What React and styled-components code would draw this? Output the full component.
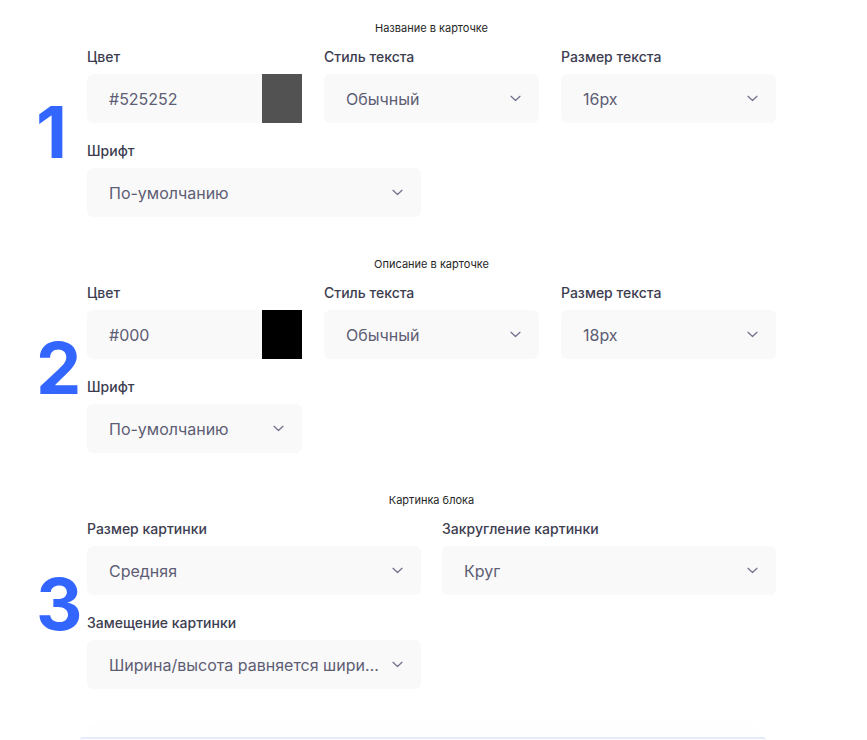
import React from "react";
import styled, { createGlobalStyle } from "styled-components";

const Global = createGlobalStyle`
  html, body { margin: 0; padding: 0; background: #ffffff; }
  body { font-family: Inter, "Noto Sans", "Liberation Sans", sans-serif; -webkit-font-smoothing: antialiased; }
  * { box-sizing: border-box; }
`;

const Page = styled.div`
  width: 867px;
  height: 740px;
  overflow: hidden;
  padding-top: 21px;
  display: flex;
  flex-direction: column;
  gap: 40px;
`;

const Section = styled.section`
  display: flex;
  flex-direction: column;
  padding-left: 36px;
`;

const Title = styled.div`
  margin-left: 51px;
  width: 689px;
  text-align: center;
  font-size: 11px;
  line-height: 14px;
  color: #262626;
  margin-bottom: 12px;
`;

const Body = styled.div`
  display: flex;
  align-items: center;
`;

const Number = styled.div`
  width: 51px;
  flex: none;
  font-size: 72px;
  font-weight: 700;
  line-height: 1;
  color: #3366ff;
  letter-spacing: -1px;
`;

const Form = styled.div`
  width: 689px;
  display: grid;
  grid-template-columns: repeat(${(p) => p.$cols}, 1fr);
  column-gap: ${(p) => (p.$cols === 3 ? 22 : 21)}px;
  row-gap: 18px;
`;

const FullRow = styled.div`
  grid-column: 1 / -1;
  display: grid;
  grid-template-columns: 334px;
`;

const Field = styled.div`
  display: flex;
  flex-direction: column;
  gap: 7px;
  min-width: 0;
`;

const Label = styled.div`
  font-size: 14px;
  line-height: 20px;
  font-weight: 450;
  color: #3d3d50;
`;

const ColorBox = styled.div`
  display: flex;
  height: 49px;
`;

const ColorText = styled.div`
  flex: 1;
  background: #f9f9fa;
  border-radius: 6px 0 0 6px;
  display: flex;
  align-items: center;
  padding-left: 22px;
  font-size: 16px;
  color: #5d5d73;
`;

const Swatch = styled.div`
  width: 40px;
  flex: none;
  background: ${(p) => p.$color};
`;

const SelectBox = styled.div`
  height: 49px;
  background: #f9f9fa;
  border-radius: 6px;
  display: flex;
  align-items: center;
  padding: 0 18px 0 22px;
  gap: 10px;
  min-width: 0;
`;

const Value = styled.span`
  flex: 1;
  min-width: 0;
  font-size: 16px;
  color: #5d5d73;
  white-space: nowrap;
  overflow: hidden;
  text-overflow: ellipsis;
`;

const Chevron = () => (
  <svg width="11" height="7" viewBox="0 0 11 7" fill="none" style={{ flex: "none" }}>
    <path d="M1 1.3L5.5 5.5L10 1.3" stroke="#71718e" strokeWidth="1.25" strokeLinecap="round" strokeLinejoin="round" />
  </svg>
);

const Select = ({ value }) => (
  <SelectBox>
    <Value>{value}</Value>
    <Chevron />
  </SelectBox>
);

const Card = styled.div`
  margin-top: 8px;
  margin-left: 80px;
  width: 686px;
  height: 40px;
  background: #ffffff;
  border-top: 2px solid #e4ecfb;
  border-radius: 6px 6px 0 0;
  box-shadow: 0 -6px 24px rgba(90, 120, 200, 0.06);
`;

const ColorField = ({ value, color }) => (
  <Field>
    <Label>Цвет</Label>
    <ColorBox>
      <ColorText>{value}</ColorText>
      <Swatch $color={color} />
    </ColorBox>
  </Field>
);

const SelectField = ({ label, value }) => (
  <Field>
    <Label>{label}</Label>
    <Select value={value} />
  </Field>
);

export default function App() {
  return (
    <>
      <Global />
      <Page>
        <Section>
          <Title>Название в карточке</Title>
          <Body>
            <Number>1</Number>
            <Form $cols={3}>
              <ColorField value="#525252" color="#525252" />
              <SelectField label="Стиль текста" value="Обычный" />
              <SelectField label="Размер текста" value="16px" />
              <FullRow>
                <SelectField label="Шрифт" value="По-умолчанию" />
              </FullRow>
            </Form>
          </Body>
        </Section>
        <Section>
          <Title>Описание в карточке</Title>
          <Body>
            <Number>2</Number>
            <Form $cols={3}>
              <ColorField value="#000" color="#000000" />
              <SelectField label="Стиль текста" value="Обычный" />
              <SelectField label="Размер текста" value="18px" />
              <SelectField label="Шрифт" value="По-умолчанию" />
            </Form>
          </Body>
        </Section>
        <Section>
          <Title>Картинка блока</Title>
          <Body>
            <Number>3</Number>
            <Form $cols={2}>
              <SelectField label="Размер картинки" value="Средняя" />
              <SelectField label="Закругление картинки" value="Круг" />
              <SelectField label="Замещение картинки" value="Ширина/высота равняется ширине блока" />
            </Form>
          </Body>
        </Section>
        <Card />
      </Page>
    </>
  );
}
